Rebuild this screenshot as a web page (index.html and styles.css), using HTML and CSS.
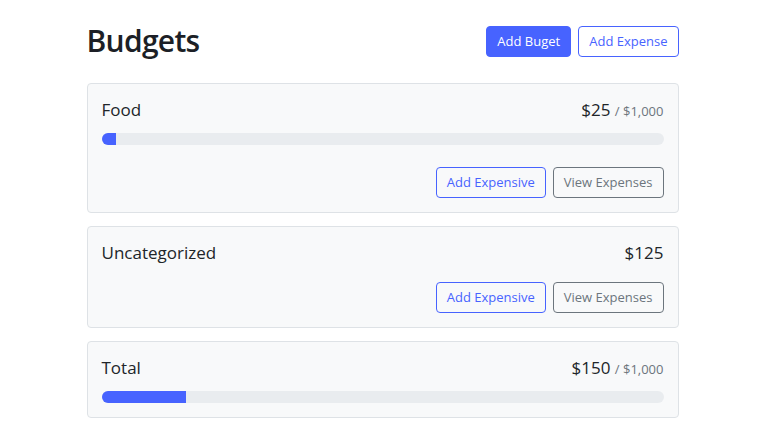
FILE: index.html
```html
<!DOCTYPE html>
<html lang="en">

<head>
    <meta charset="UTF-8">
    <meta name="viewport" content="width=device-width, initial-scale=1.0">
    <title>Budgets</title>
    <link rel="stylesheet" href="styles.css">
</head>

<body>

    <div class="container">
        <header class="page-header">
            <h1>Budgets</h1>
            <div class="btn-group">
                <button class="btn btn-primary">Add Buget</button>
                <button class="btn btn-outline-primary">Add Expense</button>
            </div>
        </header>

        <div class="card-list">
            <div class="card">
                <div class="card-title">
                    <span class="name">Food</span>
                    <span class="amount">$25 <span class="max">/ $1,000</span></span>
                </div>
                <div class="progress">
                    <div class="progress-bar" style="width: 2.5%"></div>
                </div>
                <div class="actions">
                    <button class="btn btn-outline-primary">Add Expensive</button>
                    <button class="btn btn-outline-secondary">View Expenses</button>
                </div>
            </div>

            <div class="card">
                <div class="card-title">
                    <span class="name">Uncategorized</span>
                    <span class="amount">$125</span>
                </div>
                <div class="actions">
                    <button class="btn btn-outline-primary">Add Expensive</button>
                    <button class="btn btn-outline-secondary">View Expenses</button>
                </div>
            </div>

            <div class="card">
                <div class="card-title">
                    <span class="name">Total</span>
                    <span class="amount">$150 <span class="max">/ $1,000</span></span>
                </div>
                <div class="progress">
                    <div class="progress-bar" style="width: 15%"></div>
                </div>
            </div>
        </div>
    </div>

</body>

</html>
```

FILE: styles.css
```css
body {
    margin: 0;
    font-family: 'Open Sans', sans-serif;
    background-color: #fff;
    color: #212529;
}

.container {
    width: 592px;
    margin: 0 auto;
    padding-top: 22px;
    padding-left: 1px;
}

.page-header {
    display: flex;
    justify-content: space-between;
    align-items: center;
    margin-bottom: 23px;
}

h1 {
    margin: 0;
    font-size: 30px;
    font-weight: 600;
    line-height: 38px;
    letter-spacing: -0.7px;
    color: #1c1f26;
}

.btn-group {
    display: flex;
    gap: 7px;
}

.btn {
    font-family: inherit;
    font-size: 13px;
    line-height: 21px;
    padding: 4px 10px;
    border: 1px solid transparent;
    border-radius: 4px;
    background: transparent;
    cursor: pointer;
}

.btn-primary {
    background-color: #4763ff;
    border-color: #4763ff;
    color: #fff;
}

.btn-outline-primary {
    border-color: #4763ff;
    color: #4763ff;
}

.btn-outline-secondary {
    border-color: #6c757d;
    color: #6c757d;
}

.card-list {
    display: flex;
    flex-direction: column;
    gap: 13px;
}

.card {
    background-color: #f8f9fa;
    border: 1px solid #dee2e6;
    border-radius: 4px;
    padding: 14px;
}

.card-title {
    display: flex;
    justify-content: space-between;
    align-items: baseline;
    font-size: 17px;
    line-height: 24px;
}

.max {
    font-size: 13px;
    color: #6c757d;
}

.progress {
    margin-top: 10px;
    height: 12px;
    background-color: #e9ecef;
    border-radius: 6px;
    overflow: hidden;
}

.progress-bar {
    height: 100%;
    background-color: #4763ff;
}

.actions {
    display: flex;
    justify-content: flex-end;
    gap: 7px;
    margin-top: 17px;
}

.progress + .actions {
    margin-top: 22px;
}
```
